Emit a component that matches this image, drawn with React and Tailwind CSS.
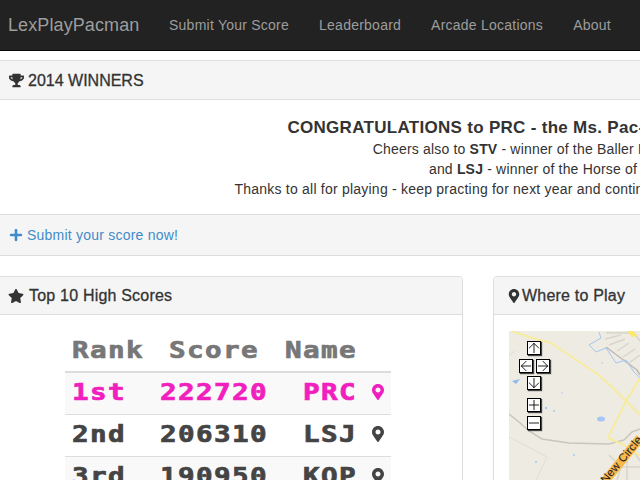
import { FaTrophy, FaStar, FaPlus, FaMapMarkerAlt } from 'react-icons/fa';
import { ArrowUp, ArrowDown, ArrowLeft, ArrowRight, Plus, Minus } from 'lucide-react';

const scores = [
  { rank: '1st', score: '222720', name: 'PRC', hot: true },
  { rank: '2nd', score: '206310', name: 'LSJ' },
  { rank: '3rd', score: '190950', name: 'KOP' },
];

// arcade style text: the glyphs are stretched to look wide and blocky
const Wide = ({ right, children }) => (
  <span className={`inline-block scale-x-[1.2] ${right ? 'origin-right' : 'origin-left'}`}>{children}</span>
);

const ScoreRow = ({ rank, score, name, hot, striped }) => (
  <tr className={`${hot ? 'text-[#f01fbe]' : 'text-[#444]'} ${striped ? 'bg-[#f9f9f9]' : ''} border-t border-[#ddd]`}>
    <td className="h-[42px] pb-[2px] pl-[7px]"><Wide>{rank}</Wide></td>
    <td className="pb-[2px] pl-[8px] text-left"><Wide>{score}</Wide></td>
    <td className="pb-[2px] pr-[7px] text-right"><Wide right>{name}</Wide></td>
    <td className="w-[27px] pb-[2px]">
      <FaMapMarkerAlt className="mx-auto text-[16px]" />
    </td>
  </tr>
);

const MapButton = ({ className, children }) => (
  <div className={`absolute size-[14px] bg-white border border-black shadow-[1px_1px_1px_#444] flex items-center justify-center text-black ${className}`}>
    {children}
  </div>
);

const iconProps = { size: 16, strokeWidth: 1.3, className: 'shrink-0' };

const MapPanel = () => (
  <div className="relative h-[400px] w-[400px] bg-[#eeebe3] overflow-hidden">
    <svg width="400" height="400" viewBox="0 0 400 400" fill="none" className="absolute inset-0">
      {/* faint boundaries and streets */}
      <path d="M0 106 L10 111 L38 126 L27 149" stroke="#e2decf" strokeWidth="1" />
      <path d="M0 24 L6 20" stroke="#e2decf" strokeWidth="1" />
      <path d="M97 2 L125 2 L131 10 M96 8 L112 4 M100 14 L116 8 M108 20 L120 12 M114 26 L126 18 M120 32 L131 24" stroke="#d8d5cb" strokeWidth="1.5" />
      <path d="M100 124 L112 136 L108 149 M118 126 L118 149 M126 122 L131 130 M112 136 L131 136" stroke="#d8d5cb" strokeWidth="1.5" />
      {/* grey roads */}
      <path d="M0 83 L10 91 L20 100 L33 108 L60 112 L100 113 L115 109 L123 101 L131 98" stroke="#c9c6be" strokeWidth="1.5" />
      <path d="M97 16 L105 22 L128 39 L131 44" stroke="#bdbab3" strokeWidth="1.5" />
      {/* water */}
      <path d="M90 1 L92 7 L80 14 L87 21 L97 17 L107 32 L117 29 L125 41 L131 47" stroke="#a3c6f4" strokeWidth="1" />
      <path d="M3 50 L11 48 L7 53 Z" fill="#8fb8ee" />
      <ellipse cx="92" cy="88" rx="4" ry="2.5" fill="#a3c6f4" />
      <circle cx="37" cy="77" r="1.2" fill="#a3c6f4" />
      <circle cx="45" cy="80" r="1" fill="#a3c6f4" />
      <circle cx="65" cy="124" r="1" fill="#a3c6f4" />
      <circle cx="27" cy="131" r="1" fill="#a3c6f4" />
      <circle cx="53" cy="62" r="0.8" fill="#a3c6f4" />
      <circle cx="93" cy="32" r="0.8" fill="#a3c6f4" />
      {/* yellow roads */}
      <g stroke="#f7eb9f" strokeWidth="2" strokeLinejoin="round">
        <path d="M3 0 L20 6 L42 12 L60 24 L87 42 L103 56 L117 70 L131 84" />
        <path d="M131 47 L117 70 L99 107 L115 114 L131 125" />
      </g>
      <path d="M118 0 L124 0 L128 5 L123 6 Z" fill="#fde86a" />
      {/* New Circle Road */}
      <path d="M96 150 L131 107" stroke="#f9b84a" strokeWidth="9" />
      <text
        x="113"
        y="129"
        transform="rotate(-50 113 129)"
        textAnchor="middle"
        dominantBaseline="middle"
        fontSize="11.5"
        fill="#222"
      >
        New Circle
      </text>
    </svg>
    <MapButton className="left-[18px] top-[10px]"><ArrowUp {...iconProps} /></MapButton>
    <MapButton className="left-[10px] top-[28px]"><ArrowLeft {...iconProps} /></MapButton>
    <MapButton className="left-[27px] top-[28px]"><ArrowRight {...iconProps} /></MapButton>
    <MapButton className="left-[18px] top-[45px]"><ArrowDown {...iconProps} /></MapButton>
    <MapButton className="left-[18px] top-[67px]"><Plus {...iconProps} /></MapButton>
    <MapButton className="left-[18px] top-[85px]"><Minus {...iconProps} /></MapButton>
  </div>
);

export default function App() {
  return (
    <div className="w-[640px] h-[480px] overflow-hidden bg-white text-[14px] leading-5 tracking-[0.18px] text-[#333] font-['Liberation_Sans',sans-serif]">
      <div className="-ml-[7px] w-[1184px]">
        {/* Navbar */}
        <nav className="h-[51px] bg-[#222] border-b border-[#080808] flex items-center text-[#9d9d9d]">
          <a className="pl-[15px] w-[161px] text-[18px] tracking-[0.1px]">LexPlayPacman</a>
          <ul className="flex gap-[30px] pl-[15px] text-[14px] tracking-[0.24px]">
            <li>Submit Your Score</li>
            <li>Leaderboard</li>
            <li>Arcade Locations</li>
            <li>About</li>
          </ul>
        </nav>

        {/* Winners */}
        <section className="mt-[9px] border-y border-[#ddd]">
          <h3 className="h-[39px] pt-px bg-[#f5f5f5] border-b border-[#ddd] pl-[16px] flex items-center gap-[4px] text-[16px] tracking-normal [-webkit-text-stroke:0.3px]">
            <FaTrophy className="text-[15px]" /> 2014 WINNERS
          </h3>
          <div className="h-[114px] pt-[18px] text-center">
            <p className="text-[17px] font-bold tracking-[0.3px]">CONGRATULATIONS to PRC - the Ms. Pac-Man 2014 Lexington Winner!</p>
            <p className="mt-[1px]">Cheers also to <b>STV</b> - winner of the Baller Division of a tournament!</p>
            <p>and <b>LSJ</b> - winner of the Horse of the Year award!</p>
            <p className="tracking-[0.22px]">Thanks to all for playing - keep practing for next year and continue to support our local arcades all 4 seasons!</p>
          </div>
          <div className="h-[41px] bg-[#f5f5f5] border-t border-[#ddd] pl-[16px] flex items-center gap-[4px] text-[#428bca] tracking-[0.22px]">
            <FaPlus className="text-[14px]" /> Submit your score now!
          </div>
        </section>

        {/* Scores and map */}
        <div className="mt-[20px] flex gap-[30px] items-start">
          <section className="w-[470px] border border-[#ddd] rounded">
            <h3 className="h-[38px] bg-[#f5f5f5] border-b border-[#ddd] pl-[15px] flex items-center gap-[5px] text-[16px] tracking-[0.2px] [-webkit-text-stroke:0.3px] rounded-t">
              <FaStar className="text-[16px] -ml-px" /> Top 10 High Scores
            </h3>
            <div className="px-[71px] pt-[16px]">
              <table className="w-[326px] table-fixed font-['DejaVu_Sans_Mono',monospace] font-bold text-[23px] tracking-[1.15px] [-webkit-text-stroke:0.7px]">
                <colgroup>
                  <col className="w-[87px]" />
                  <col className="w-[124px]" />
                  <col className="w-[88px]" />
                  <col className="w-[27px]" />
                </colgroup>
                <thead>
                  <tr className="text-[#777] border-b-2 border-[#ddd]">
                    <th className="h-[41px] pb-[2px] pl-[7px] text-left"><Wide>Rank</Wide></th>
                    <th className="pb-[2px] pl-[17px] text-left"><Wide>Score</Wide></th>
                    <th className="pb-[2px] pr-[7px] text-right"><Wide right>Name</Wide></th>
                    <th />
                  </tr>
                </thead>
                <tbody>
                  {scores.map((s, i) => (
                    <ScoreRow key={s.rank} {...s} striped={i % 2 === 0} />
                  ))}
                </tbody>
              </table>
            </div>
          </section>

          <section className="w-[470px] border border-[#ddd] rounded">
            <h3 className="h-[38px] bg-[#f5f5f5] border-b border-[#ddd] pl-[15px] flex items-center gap-[1px] text-[16px] tracking-[0.2px] [-webkit-text-stroke:0.3px] rounded-t">
              <FaMapMarkerAlt className="text-[14px] -ml-[2px]" /> Where to Play
            </h3>
            <div className="px-[15px] pt-[16px]">
              <MapPanel />
            </div>
          </section>
        </div>
      </div>
    </div>
  );
}
